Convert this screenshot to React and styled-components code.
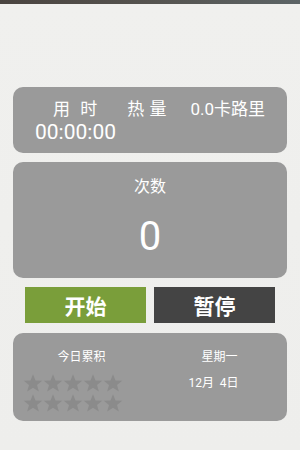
import React from 'react';
import styled, { createGlobalStyle } from 'styled-components';

const GlobalStyle = createGlobalStyle`
  html, body {
    margin: 0;
    padding: 0;
    background: #efefed;
    font-family: Roboto, "Noto Sans CJK SC", sans-serif;
  }
`;

const Page = styled.div`
  width: 300px;
  height: 450px;
  overflow: hidden;
  background: linear-gradient(#f0f0ee, #eeeeec);
  display: flex;
  flex-direction: column;
`;

const StatusStrip = styled.div`
  height: 4px;
  background: linear-gradient(90deg, #4a4440, #55534f 50%, #5c6466);
  margin-bottom: 83px;
`;

const Card = styled.div`
  margin: 0 13px;
  width: 274px;
  height: ${p => p.h}px;
  box-sizing: border-box;
  background: #9a9a9a;
  border-radius: 10px;
  color: #fff;
  margin-bottom: ${p => p.mb || 0}px;
`;

const TimeCard = styled(Card)`
  padding: 12px 0 0 22px;
`;

const InfoRow = styled.div`
  display: flex;
  align-items: baseline;
  font-size: 17px;
  line-height: 20px;
  padding-left: 18px;
`;

const Label = styled.span`
  margin-right: ${p => p.mr}px;
  word-spacing: ${p => p.ws || 0}px;
  white-space: pre;
`;

const Clock = styled.div`
  font-size: 21px;
  line-height: 26px;
`;

const CountCard = styled(Card)`
  display: flex;
  flex-direction: column;
  align-items: center;
  padding-top: 15px;
`;

const CountTitle = styled.div`
  font-size: 16px;
  line-height: 20px;
`;

const CountValue = styled.div`
  font-size: 40px;
  line-height: 48px;
  margin-top: 16px;
`;

const ButtonRow = styled.div`
  display: flex;
  gap: 8px;
  padding-left: 25px;
  margin-bottom: 10px;
`;

const Button = styled.div`
  width: 121px;
  height: 36px;
  background: ${p => p.bg};
  color: #fff;
  font-size: 21px;
  font-weight: bold;
  display: flex;
  align-items: center;
  justify-content: center;
`;

const SummaryCard = styled(Card)`
  display: grid;
  grid-template-columns: 137px 137px;
  padding-top: 15px;
`;

const Column = styled.div`
  display: flex;
  flex-direction: column;
  align-items: center;
`;

const Small = styled.div`
  font-size: 12px;
  line-height: 18px;
  white-space: pre;
  margin-top: ${p => p.mt || 0}px;
  margin-left: ${p => p.ml || 0}px;
`;

const Stars = styled.div`
  align-self: flex-start;
  display: grid;
  grid-template-columns: repeat(5, 20px);
  margin-top: 7px;
  margin-left: 10px;
`;

const Star = () => (
  <svg width="20" height="20" viewBox="0 0 24 24">
    <polygon
      points="12,1.5 15,9 23,9.3 16.8,14.3 19,22.3 12,17.8 5,22.3 7.2,14.3 1,9.3 9,9"
      fill="#8b8b8b"
    />
  </svg>
);

export default function App() {
  return (
    <Page>
      <GlobalStyle />
      <StatusStrip />
      <TimeCard h={66} mb={9}>
        <InfoRow>
          <Label mr={30} ws={6}>用 时</Label>
          <Label mr={24} ws={1}>热 量</Label>
          <Label mr={0}>0.0卡路里</Label>
        </InfoRow>
        <Clock>00:00:00</Clock>
      </TimeCard>
      <CountCard h={116} mb={9}>
        <CountTitle>次数</CountTitle>
        <CountValue>0</CountValue>
      </CountCard>
      <ButtonRow>
        <Button bg="#7a9e3a">开始</Button>
        <Button bg="#444444">暂停</Button>
      </ButtonRow>
      <SummaryCard h={88}>
        <Column>
          <Small>今日累积</Small>
          <Stars>
            {Array.from({ length: 10 }).map((_, i) => (
              <Star key={i} />
            ))}
          </Stars>
        </Column>
        <Column>
          <Small ml={2}>星期一</Small>
          <Small mt={8} ml={-10}>12月  4日</Small>
        </Column>
      </SummaryCard>
    </Page>
  );
}
